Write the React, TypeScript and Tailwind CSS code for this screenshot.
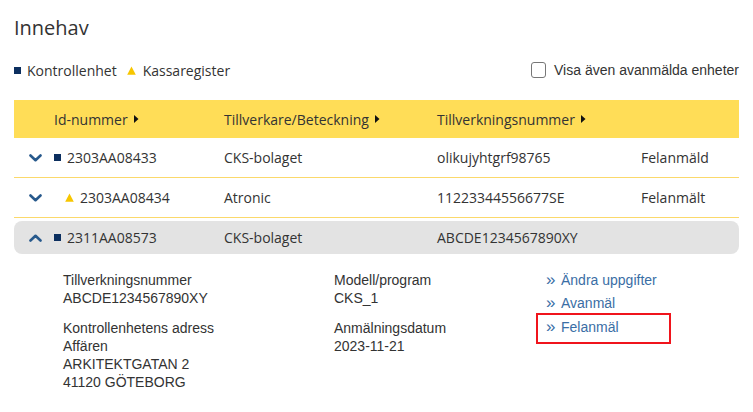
import React from "react";

const Chevron = ({ up }: { up?: boolean }) => (
  <svg width="13" height="8" viewBox="0 0 13 8" className="shrink-0">
    <path
      d={up ? "M1.5 6.5 L6.5 1.8 L11.5 6.5" : "M1.5 1.5 L6.5 6.2 L11.5 1.5"}
      fill="none"
      stroke="#27598c"
      strokeWidth="2.6"
      strokeLinecap="round"
      strokeLinejoin="round"
    />
  </svg>
);

const Square = () => <span className="inline-block w-[7px] h-[7px] bg-[#0c2f5f] shrink-0" />;
const Triangle = () => (
  <svg width="9" height="9" viewBox="0 0 9 9" className="shrink-0">
    <polygon points="4.5,0.5 8.8,8.8 0.2,8.8" fill="#f7c600" />
  </svg>
);
const SortArrow = () => (
  <svg width="5" height="8" viewBox="0 0 5 8" className="ml-[6px] shrink-0">
    <polygon points="0,0 4.5,4 0,8" fill="#111" />
  </svg>
);
const Link = ({ children }: { children: React.ReactNode }) => (
  <div className="flex items-center text-[#3a6ea5] h-[20px]">
    <span className="w-[15px] text-[17px] leading-none -mt-[2px]">»</span>
    <span>{children}</span>
  </div>
);

export default function App() {
  const open = "font-['Open_Sans',sans-serif]";
  return (
    <div className={`w-[753px] h-[412px] bg-white text-[#333] overflow-hidden ${open}`}>
      <div className="pl-[14px] pr-[14px]">
        <h1 className="text-[20px] leading-[28px] pt-[14px] text-[#333]">Innehav</h1>
        <div className="flex items-center justify-between mt-[18px] h-[20px]">
          <div className="flex items-center text-[14px]">
            <Square />
            <span className="ml-[6px]">Kontrollenhet</span>
            <span className="ml-[10px]"><Triangle /></span>
            <span className="ml-[7px]">Kassaregister</span>
          </div>
          <label className="flex items-center font-['Liberation_Sans',Arial,sans-serif] text-[14px] text-[#333]">
            <span className="w-[15px] h-[16px] border border-[#777] rounded-[3px] bg-white" />
            <span className="ml-[8px]">Visa även avanmälda enheter</span>
          </label>
        </div>

        <div className="mt-[20px] w-[725px]">
          <div className="flex items-center h-[38px] bg-[#ffdd57] text-[14px] text-[#333]">
            <div className="w-[210px] pl-[40px] flex items-center">Id-nummer<SortArrow /></div>
            <div className="w-[213px] flex items-center">Tillverkare/Beteckning<SortArrow /></div>
            <div className="flex items-center">Tillverkningsnummer<SortArrow /></div>
          </div>

          <div className="flex items-center h-[40px] border-b border-[#fbd96b] text-[14px]">
            <div className="w-[40px] pl-[15px]"><Chevron /></div>
            <div className="w-[170px] flex items-center"><Square /><span className="ml-[6px]">2303AA08433</span></div>
            <div className="w-[213px]">CKS-bolaget</div>
            <div className="w-[204px]">olikujyhtgrf98765</div>
            <div>Felanmäld</div>
          </div>
          <div className="flex items-center h-[40px] border-b border-[#fbd96b] text-[14px]">
            <div className="w-[40px] pl-[15px]"><Chevron /></div>
            <div className="w-[170px] flex items-center pl-[11px]"><Triangle /><span className="ml-[6px]">2303AA08434</span></div>
            <div className="w-[213px]">Atronic</div>
            <div className="w-[204px]">11223344556677SE</div>
            <div>Felanmält</div>
          </div>
          <div className="flex items-center h-[33px] mt-[3px] bg-[#e3e3e3] rounded-[8px] text-[14px]">
            <div className="w-[40px] pl-[15px]"><Chevron up /></div>
            <div className="w-[170px] flex items-center"><Square /><span className="ml-[6px]">2311AA08573</span></div>
            <div className="w-[213px]">CKS-bolaget</div>
            <div>ABCDE1234567890XY</div>
          </div>

          <div className="flex pt-[17px] font-['Liberation_Sans',Arial,sans-serif] text-[14px] leading-[18px] text-[#333]">
            <div className="w-[320px] pl-[49px]">
              <div>Tillverkningsnummer</div>
              <div>ABCDE1234567890XY</div>
              <div className="mt-[12px]">Kontrollenhetens adress</div>
              <div>Affären</div>
              <div>ARKITEKTGATAN 2</div>
              <div>41120 GÖTEBORG</div>
            </div>
            <div className="w-[212px]">
              <div>Modell/program</div>
              <div>CKS_1</div>
              <div className="mt-[12px]">Anmälningsdatum</div>
              <div>2023-11-21</div>
            </div>
            <div className="flex flex-col -mt-[1px]">
              <Link>Ändra uppgifter</Link>
              <div className="mt-[3px]"><Link>Avanmäl</Link></div>
              <div className="relative mt-[4px]">
                <Link>Felanmäl</Link>
                <div className="absolute left-[-10px] top-[-4px] w-[135px] h-[31px] border-2 border-[#f0141c]" />
              </div>
            </div>
          </div>
        </div>
      </div>
    </div>
  );
}
